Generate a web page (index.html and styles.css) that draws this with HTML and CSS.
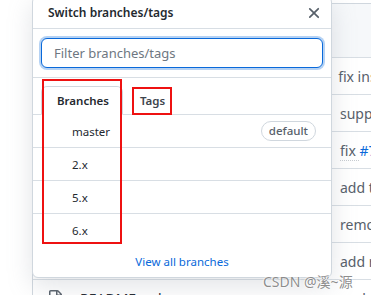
FILE: index.html
```html
<!DOCTYPE html>
<html lang="en">
<head>
    <meta charset="UTF-8">
    <meta name="viewport" content="width=device-width, initial-scale=1.0">
    <title>Switch branches/tags</title>
    <link rel="stylesheet" href="styles.css">
</head>
<body>
    <div class="page">
        <div class="repo-box">
            <div class="box-header"></div>
            <div class="file-row">
                <svg class="file-icon" viewBox="0 0 16 16" width="16" height="16"><path d="M2 1.75C2 .784 2.784 0 3.75 0h6.586c.464 0 .909.184 1.237.513l2.914 2.914c.329.328.513.773.513 1.237v9.586A1.75 1.75 0 0 1 13.250 16h-9.5A1.75 1.75 0 0 1 2 14.25Zm1.75-.25a.25.25 0 0 0-.25.25v12.5c0 .138.112.25.25.25h9.5a.25.25 0 0 0 .25-.25V6h-2.75A1.75 1.75 0 0 1 9 4.25V1.5Zm6.75.062V4.25c0 .138.112.25.25.25h2.688l-.011-.013-2.914-2.914-.013-.011Z"/></svg>
                <span class="file-name">.github</span>
                <span class="commit-msg">fix inspect output</span>
            </div>
            <div class="file-row">
                <svg class="file-icon" viewBox="0 0 16 16" width="16" height="16"><path d="M2 1.75C2 .784 2.784 0 3.75 0h6.586c.464 0 .909.184 1.237.513l2.914 2.914c.329.328.513.773.513 1.237v9.586A1.75 1.75 0 0 1 13.25 16h-9.5A1.75 1.75 0 0 1 2 14.25Zm1.75-.25a.25.25 0 0 0-.25.25v12.5c0 .138.112.25.25.25h9.5a.25.25 0 0 0 .25-.25V6h-2.75A1.75 1.75 0 0 1 9 4.25V1.5Zm6.75.062V4.25c0 .138.112.25.25.25h2.688l-.011-.013-2.914-2.914-.013-.011Z"/></svg>
                <span class="file-name">benchmark</span>
                <span class="commit-msg">support node 14</span>
            </div>
            <div class="file-row">
                <svg class="file-icon" viewBox="0 0 16 16" width="16" height="16"><path d="M2 1.75C2 .784 2.784 0 3.75 0h6.586c.464 0 .909.184 1.237.513l2.914 2.914c.329.328.513.773.513 1.237v9.586A1.75 1.75 0 0 1 13.25 16h-9.5A1.75 1.75 0 0 1 2 14.25Zm1.75-.25a.25.25 0 0 0-.25.25v12.5c0 .138.112.25.25.25h9.5a.25.25 0 0 0 .25-.25V6h-2.75A1.75 1.75 0 0 1 9 4.25V1.5Zm6.75.062V4.25c0 .138.112.25.25.25h2.688l-.011-.013-2.914-2.914-.013-.011Z"/></svg>
                <span class="file-name">lib</span>
                <span class="commit-msg"><span class="dotted">fix </span><span class="issue">#712</span></span>
            </div>
            <div class="file-row">
                <svg class="file-icon" viewBox="0 0 16 16" width="16" height="16"><path d="M2 1.75C2 .784 2.784 0 3.75 0h6.586c.464 0 .909.184 1.237.513l2.914 2.914c.329.328.513.773.513 1.237v9.586A1.75 1.75 0 0 1 13.25 16h-9.5A1.75 1.75 0 0 1 2 14.25Zm1.75-.25a.25.25 0 0 0-.25.25v12.5c0 .138.112.25.25.25h9.5a.25.25 0 0 0 .25-.25V6h-2.75A1.75 1.75 0 0 1 9 4.25V1.5Zm6.75.062V4.25c0 .138.112.25.25.25h2.688l-.011-.013-2.914-2.914-.013-.011Z"/></svg>
                <span class="file-name">test</span>
                <span class="commit-msg">add tests</span>
            </div>
            <div class="file-row">
                <svg class="file-icon" viewBox="0 0 16 16" width="16" height="16"><path d="M2 1.75C2 .784 2.784 0 3.75 0h6.586c.464 0 .909.184 1.237.513l2.914 2.914c.329.328.513.773.513 1.237v9.586A1.75 1.75 0 0 1 13.25 16h-9.5A1.75 1.75 0 0 1 2 14.25Zm1.75-.25a.25.25 0 0 0-.25.25v12.5c0 .138.112.25.25.25h9.5a.25.25 0 0 0 .25-.25V6h-2.75A1.75 1.75 0 0 1 9 4.25V1.5Zm6.75.062V4.25c0 .138.112.25.25.25h2.688l-.011-.013-2.914-2.914-.013-.011Z"/></svg>
                <span class="file-name">.gitignore</span>
                <span class="commit-msg">remove travis</span>
            </div>
            <div class="file-row">
                <svg class="file-icon" viewBox="0 0 16 16" width="16" height="16"><path d="M2 1.75C2 .784 2.784 0 3.75 0h6.586c.464 0 .909.184 1.237.513l2.914 2.914c.329.328.513.773.513 1.237v9.586A1.75 1.75 0 0 1 13.25 16h-9.5A1.75 1.75 0 0 1 2 14.25Zm1.75-.25a.25.25 0 0 0-.25.25v12.5c0 .138.112.25.25.25h9.5a.25.25 0 0 0 .25-.25V6h-2.75A1.75 1.75 0 0 1 9 4.25V1.5Zm6.75.062V4.25c0 .138.112.25.25.25h2.688l-.011-.013-2.914-2.914-.013-.011Z"/></svg>
                <span class="file-name">LICENSE</span>
                <span class="commit-msg">add readme</span>
            </div>
            <div class="file-row">
                <svg class="file-icon" viewBox="0 0 16 16" width="16" height="16"><path d="M2 1.75C2 .784 2.784 0 3.75 0h6.586c.464 0 .909.184 1.237.513l2.914 2.914c.329.328.513.773.513 1.237v9.586A1.75 1.75 0 0 1 13.25 16h-9.5A1.75 1.75 0 0 1 2 14.25Zm1.75-.25a.25.25 0 0 0-.25.25v12.5c0 .138.112.25.25.25h9.5a.25.25 0 0 0 .25-.25V6h-2.75A1.75 1.75 0 0 1 9 4.25V1.5Zm6.75.062V4.25c0 .138.112.25.25.25h2.688l-.011-.013-2.914-2.914-.013-.011Z"/></svg>
                <span class="file-name">README.md</span>
                <span class="commit-msg">update docs</span>
            </div>
        </div>

        <div class="branch-menu">
            <header class="menu-header">
                <span class="menu-title">Switch branches/tags</span>
                <svg class="close-icon" viewBox="0 0 16 16" width="18" height="18"><path d="M3.72 3.72a.75.75 0 0 1 1.06 0L8 6.94l3.22-3.22a.75.75 0 1 1 1.06 1.06L9.06 8l3.22 3.22a.75.75 0 1 1-1.06 1.06L8 9.06l-3.22 3.22a.75.75 0 0 1-1.06-1.06L6.94 8 3.72 4.78a.75.75 0 0 1 0-1.06Z"/></svg>
            </header>
            <div class="menu-filter">
                <input type="text" class="filter-input" placeholder="Filter branches/tags">
            </div>
            <nav class="menu-tabs">
                <span class="tab tab-active">Branches</span>
                <span class="tab">Tags</span>
            </nav>
            <div class="menu-list">
                <div class="menu-item"><span class="check"></span><span class="ref-name">master</span><span class="badge">default</span></div>
                <div class="menu-item"><span class="check"></span><span class="ref-name">2.x</span></div>
                <div class="menu-item"><span class="check"></span><span class="ref-name">5.x</span></div>
                <div class="menu-item"><span class="check"></span><span class="ref-name">6.x</span></div>
            </div>
            <div class="menu-footer"><a class="view-all">View all branches</a></div>
        </div>

        <div class="mark mark-branches"></div>
        <div class="mark mark-tags"></div>
        <div class="watermark">CSDN @溪~源</div>
    </div>
</body>
</html>
```

FILE: styles.css
```css
body {
    margin: 0;
    background: #ffffff;
    font-family: "Noto Sans", "Noto Sans CJK SC", sans-serif;
    color: #24292f;
    overflow: hidden;
}
.page {
    position: relative;
    width: 371px;
    height: 295px;
    overflow: hidden;
}

/* repository file list behind the menu */
.repo-box {
    margin: 3px 0 0 32px;
    width: 420px;
    border: 1px solid #d0d7de;
    border-radius: 6px;
}
.box-header {
    height: 53px;
    background: #f6f8fa;
}
.file-row {
    display: flex;
    align-items: center;
    height: 36px;
    padding-left: 14px;
    border-top: 1px solid #d8dee4;
    font-size: 14px;
}
.file-icon {
    fill: #57606a;
    flex: none;
}
.file-name {
    width: 260px;
    margin-left: 17px;
    color: #24292f;
}
.commit-msg {
    color: #57606a;
    white-space: nowrap;
}
.dotted {
    border-bottom: 1px dotted #c8ccd1;
}
.issue {
    color: #0969da;
}

/* branch / tag menu */
.branch-menu {
    position: absolute;
    left: 32px;
    top: -4px;
    width: 300px;
    box-sizing: border-box;
    background: #ffffff;
    border: 1px solid #d0d7de;
    border-radius: 6px;
    box-shadow: 0 8px 24px rgba(140, 149, 159, 0.25);
    font-size: 11.5px;
}
.menu-header {
    display: flex;
    align-items: center;
    justify-content: space-between;
    height: 31px;
    padding: 0 8px 0 15px;
    border-bottom: 1px solid #d8dee4;
}
.menu-title {
    font-size: 12px;
    font-weight: 600;
}
.close-icon {
    fill: #57606a;
}
.menu-filter {
    padding: 9px 8px;
    border-bottom: 1px solid #d8dee4;
}
.filter-input {
    display: block;
    width: 100%;
    height: 30px;
    box-sizing: border-box;
    padding: 0 12px;
    border: 1px solid #0969da;
    border-radius: 6px;
    box-shadow: 0 0 0 2px rgba(9, 105, 218, 0.3);
    outline: none;
    font-family: inherit;
    font-size: 13px;
    color: #24292f;
}
.filter-input::placeholder {
    color: #6e7781;
}
.menu-tabs {
    display: flex;
    padding: 8px 8px 0;
    border-bottom: 1px solid #d8dee4;
}
.tab {
    display: flex;
    align-items: center;
    height: 28px;
    box-sizing: border-box;
    padding: 0 14px;
    border: 1px solid transparent;
    border-radius: 6px 6px 0 0;
    margin-bottom: -1px;
    color: #3d444d;
    font-weight: 600;
}
.tab + .tab {
    margin-left: 2px;
}
.tab-active {
    height: 29px;
    padding: 0 13px 0 15px;
    color: #24292f;
    background: #ffffff;
    border-color: #d0d7de #d0d7de #ffffff;
}
.menu-item {
    display: flex;
    align-items: center;
    height: 32px;
    padding: 0 15px 0 16px;
    border-bottom: 1px solid #d8dee4;
}
.menu-item:last-child {
    border-bottom: none;
}
.check {
    width: 16px;
    margin-right: 7px;
}
.ref-name {
    flex: 1;
}
.badge {
    padding: 0 7px;
    line-height: 18px;
    border: 1px solid #d0d7de;
    border-radius: 2em;
    color: #57606a;
    font-weight: 500;
}
.menu-footer {
    display: flex;
    align-items: center;
    justify-content: center;
    height: 31px;
}
.view-all {
    color: #0969da;
}

/* red annotation frames */
.mark {
    position: absolute;
    border: 2px solid #ee1111;
    box-sizing: border-box;
}
.mark-branches {
    left: 42px;
    top: 79px;
    width: 80px;
    height: 165px;
}
.mark-tags {
    left: 132px;
    top: 87px;
    width: 40px;
    height: 28px;
}
.watermark {
    position: absolute;
    left: 263px;
    top: 271px;
    font-size: 14px;
    color: rgba(120, 120, 120, 0.85);
    text-shadow: 0 0 2px #ffffff, 0 0 2px #ffffff;
    white-space: nowrap;
}
```
